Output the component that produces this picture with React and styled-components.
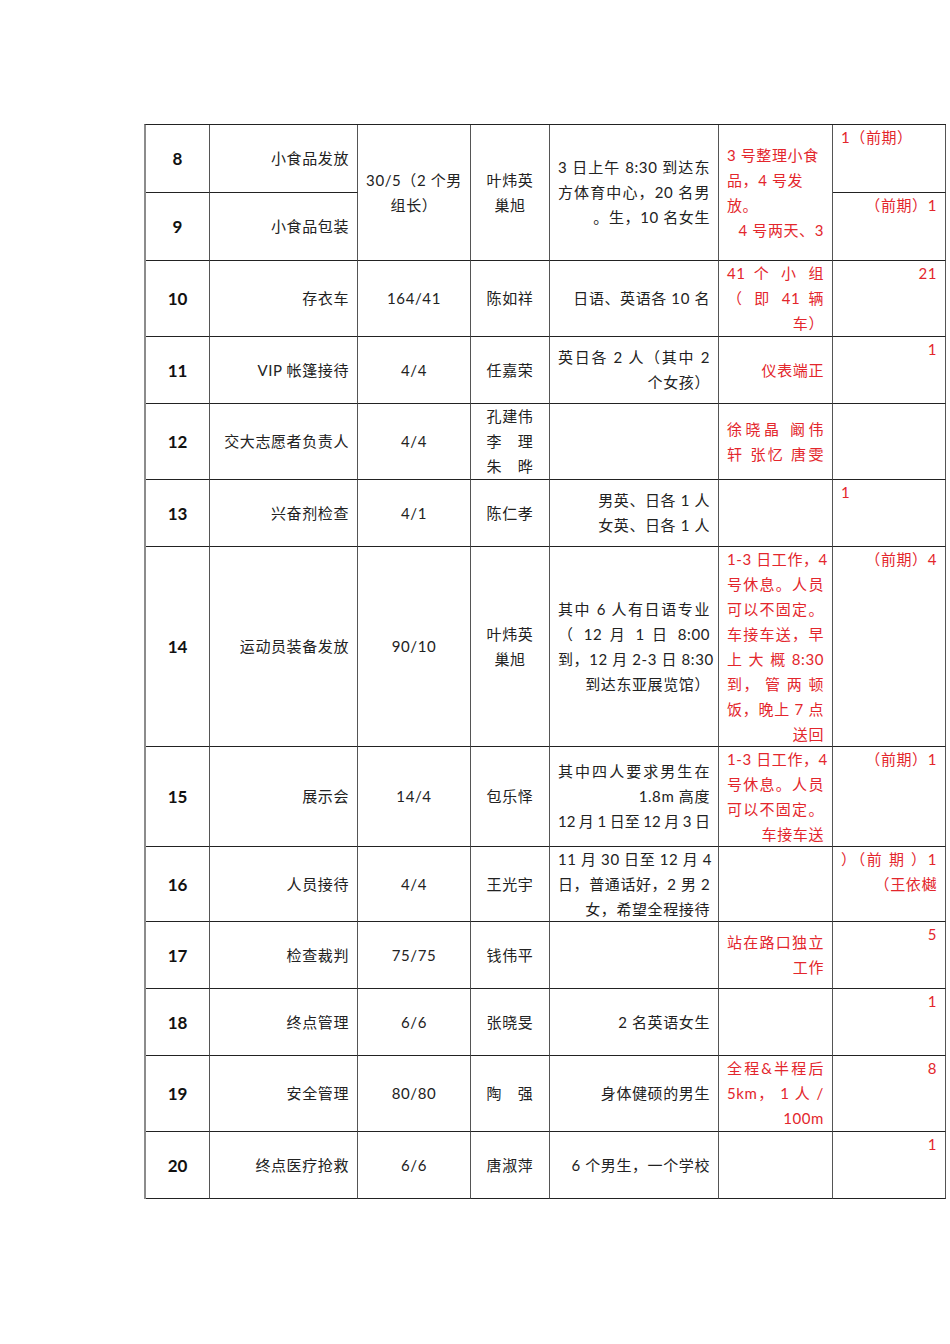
import React from "react";
import styled, { createGlobalStyle } from "styled-components";

const GlobalStyle = createGlobalStyle`
  html, body {
    margin: 0;
    padding: 0;
    background: #ffffff;
  }
  body {
    font-family: "Lato", "Noto Sans CJK SC", sans-serif;
    color: #222;
  }
`;

const Page = styled.div`
  width: 950px;
  min-height: 1344px;
  box-sizing: border-box;
  padding: 124px 0 0 144px;
`;

const Table = styled.div`
  display: grid;
  grid-template-columns: 64px 148px 113px 79px 169px 114px 113px;
  grid-template-rows: 68px 68px 76px 67px 76px 67px 200px 100px 75px 67px 67px 76px 67px;
  width: max-content;
  border-left: 2px solid #8c8c8c;
  border-top: 1px solid #222;
`;

const Cell = styled.div`
  box-sizing: border-box;
  grid-row: span ${(p) => p.$span || 1};
  border-right: 1px solid #555;
  border-bottom: 1px solid #222;
  padding: 0 8px;
  display: flex;
  flex-direction: column;
  justify-content: ${(p) => (p.$top ? "flex-start" : "center")};
  align-items: ${(p) => (p.$align === "center" ? "center" : "stretch")};
  font-size: 15px;
  line-height: 25px;
  letter-spacing: 0.6px;
  color: ${(p) => (p.$red ? "#e3262c" : "#222")};
  text-align: ${(p) => p.$align || "right"};
  overflow: hidden;
`;

const Num = styled(Cell)`
  align-items: center;
  font-size: 17px;
  font-weight: 700;
  letter-spacing: 0;
  color: #111;
`;

const Line = styled.div`
  white-space: nowrap;
  text-align: ${(p) => p.$a || "inherit"};
  ${(p) => p.$j && "text-align: justify; text-align-last: justify;"}
  ${(p) => p.$tight && "letter-spacing: 0; word-spacing: -0.5px;"}
`;

export default function App() {
  return (
    <Page>
      <GlobalStyle />
      <Table>
        {/* 8 */}
        <Num>8</Num>
        <Cell>小食品发放</Cell>
        <Cell $span={2} $align="center">
          <Line>30/5（2 个男</Line>
          <Line>组长）</Line>
        </Cell>
        <Cell $span={2} $align="center">
          <Line>叶炜英</Line>
          <Line>巢旭</Line>
        </Cell>
        <Cell $span={2}>
          <Line $j>3 日上午 8:30 到达东</Line>
          <Line $j>方体育中心，20 名男</Line>
          <Line>。生，10 名女生</Line>
        </Cell>
        <Cell $span={2} $red>
          <Line $a="left">3 号整理小食</Line>
          <Line $a="left">品，4 号发</Line>
          <Line $a="left">放。</Line>
          <Line>4 号两天、3</Line>
        </Cell>
        <Cell $red $top>
          <Line $a="left">1（前期）</Line>
        </Cell>

        {/* 9 */}
        <Num>9</Num>
        <Cell>小食品包装</Cell>
        <Cell $red $top>（前期）1</Cell>

        {/* 10 */}
        <Num>10</Num>
        <Cell>存衣车</Cell>
        <Cell $align="center">164/41</Cell>
        <Cell $align="center">陈如祥</Cell>
        <Cell>日语、英语各 10 名</Cell>
        <Cell $red>
          <Line $j>41 个 小 组</Line>
          <Line $j>（ 即 41 辆</Line>
          <Line>车）</Line>
        </Cell>
        <Cell $red $top>21</Cell>

        {/* 11 */}
        <Num>11</Num>
        <Cell>VIP 帐篷接待</Cell>
        <Cell $align="center">4/4</Cell>
        <Cell $align="center">任嘉荣</Cell>
        <Cell>
          <Line $j>英日各 2 人（其中 2</Line>
          <Line>个女孩）</Line>
        </Cell>
        <Cell $red>仪表端正</Cell>
        <Cell $red $top>1</Cell>

        {/* 12 */}
        <Num>12</Num>
        <Cell>交大志愿者负责人</Cell>
        <Cell $align="center">4/4</Cell>
        <Cell $align="center">
          <Line>孔建伟</Line>
          <Line>李　理</Line>
          <Line>朱　晔</Line>
        </Cell>
        <Cell />
        <Cell $red>
          <Line $j>徐晓晶 阚伟</Line>
          <Line $j>轩 张忆 唐雯</Line>
        </Cell>
        <Cell $red $top />

        {/* 13 */}
        <Num>13</Num>
        <Cell>兴奋剂检查</Cell>
        <Cell $align="center">4/1</Cell>
        <Cell $align="center">陈仁孝</Cell>
        <Cell>
          <Line>男英、日各 1 人</Line>
          <Line>女英、日各 1 人</Line>
        </Cell>
        <Cell />
        <Cell $red $top>
          <Line $a="left">1</Line>
        </Cell>

        {/* 14 */}
        <Num>14</Num>
        <Cell>运动员装备发放</Cell>
        <Cell $align="center">90/10</Cell>
        <Cell $align="center">
          <Line>叶炜英</Line>
          <Line>巢旭</Line>
        </Cell>
        <Cell>
          <Line $j>其中 6 人有日语专业</Line>
          <Line $j>（ 12 月 1 日 8:00</Line>
          <Line $j>到，12 月 2-3 日 8:30</Line>
          <Line>到达东亚展览馆）</Line>
        </Cell>
        <Cell $red>
          <Line $j>1-3 日工作，4</Line>
          <Line $j>号休息。人员</Line>
          <Line $j>可以不固定。</Line>
          <Line $j>车接车送，早</Line>
          <Line $j>上 大 概 8:30</Line>
          <Line $j>到， 管 两 顿</Line>
          <Line $j>饭，晚上 7 点</Line>
          <Line>送回</Line>
        </Cell>
        <Cell $red $top>（前期）4</Cell>

        {/* 15 */}
        <Num>15</Num>
        <Cell>展示会</Cell>
        <Cell $align="center">14/4</Cell>
        <Cell $align="center">包乐怿</Cell>
        <Cell>
          <Line $j>其中四人要求男生在</Line>
          <Line>1.8m 高度</Line>
          <Line $j $tight>12 月 1 日至 12 月 3 日</Line>
        </Cell>
        <Cell $red>
          <Line $j>1-3 日工作，4</Line>
          <Line $j>号休息。人员</Line>
          <Line $j>可以不固定。</Line>
          <Line>车接车送</Line>
        </Cell>
        <Cell $red $top>（前期）1</Cell>

        {/* 16 */}
        <Num>16</Num>
        <Cell>人员接待</Cell>
        <Cell $align="center">4/4</Cell>
        <Cell $align="center">王光宇</Cell>
        <Cell>
          <Line $j>11 月 30 日至 12 月 4</Line>
          <Line $j>日，普通话好，2 男 2</Line>
          <Line>女，希望全程接待</Line>
        </Cell>
        <Cell />
        <Cell $red $top>
          <Line $j>）（前 期 ）1</Line>
          <Line>（王依樾</Line>
        </Cell>

        {/* 17 */}
        <Num>17</Num>
        <Cell>检查裁判</Cell>
        <Cell $align="center">75/75</Cell>
        <Cell $align="center">钱伟平</Cell>
        <Cell />
        <Cell $red>
          <Line $j>站在路口独立</Line>
          <Line>工作</Line>
        </Cell>
        <Cell $red $top>5</Cell>

        {/* 18 */}
        <Num>18</Num>
        <Cell>终点管理</Cell>
        <Cell $align="center">6/6</Cell>
        <Cell $align="center">张晓旻</Cell>
        <Cell>2 名英语女生</Cell>
        <Cell />
        <Cell $red $top>1</Cell>

        {/* 19 */}
        <Num>19</Num>
        <Cell>安全管理</Cell>
        <Cell $align="center">80/80</Cell>
        <Cell $align="center">陶　强</Cell>
        <Cell>身体健硕的男生</Cell>
        <Cell $red>
          <Line $j>全程&amp;半程后</Line>
          <Line $j>5km， 1 人 /</Line>
          <Line>100m</Line>
        </Cell>
        <Cell $red $top>8</Cell>

        {/* 20 */}
        <Num>20</Num>
        <Cell>终点医疗抢救</Cell>
        <Cell $align="center">6/6</Cell>
        <Cell $align="center">唐淑萍</Cell>
        <Cell>6 个男生，一个学校</Cell>
        <Cell />
        <Cell $red $top>1</Cell>
      </Table>
    </Page>
  );
}
